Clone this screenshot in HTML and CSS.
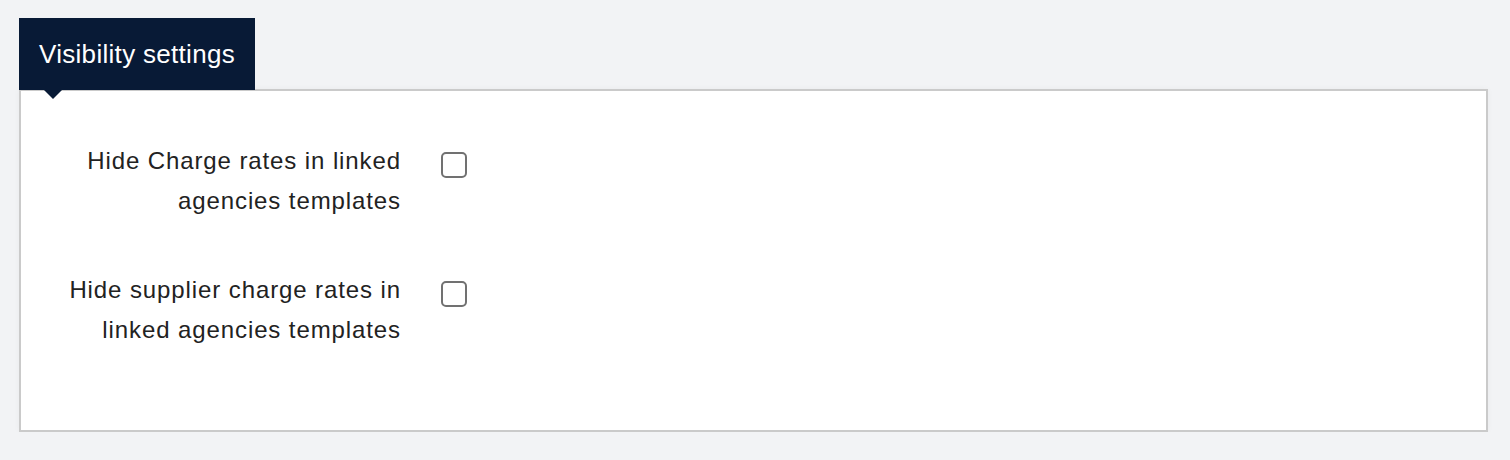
FILE: index.html
```html
<!DOCTYPE html>
<html lang="en">
<head>
<meta charset="utf-8">
<title>Visibility settings</title>
<link rel="stylesheet" href="styles.css">
</head>
<body>
<div class="page">
  <div class="tab">Visibility settings</div>
  <section class="panel">
    <div class="row">
      <label class="label" for="c1">Hide Charge rates in linked agencies templates</label>
      <span class="check"><input type="checkbox" id="c1"></span>
    </div>
    <div class="row">
      <label class="label" for="c2">Hide supplier charge rates in linked agencies templates</label>
      <span class="check"><input type="checkbox" id="c2"></span>
    </div>
  </section>
</div>
</body>
</html>
```
FILE: styles.css
```css
html, body {
  margin: 0;
  padding: 0;
  background: #f2f3f5;
  font-family: "Liberation Sans", Arial, Helvetica, sans-serif;
}
.page {
  padding: 18px 22px 0 19px;
}
.tab {
  position: relative;
  display: inline-block;
  background: #081a36;
  color: #ffffff;
  font-size: 26px;
  letter-spacing: 0.3px;
  line-height: 72px;
  height: 72px;
  padding: 0 20px 0 20px;
  box-sizing: border-box;
  z-index: 1;
}
.tab::after {
  content: "";
  position: absolute;
  left: 25px;
  bottom: -9px;
  width: 0;
  height: 0;
  border-left: 9px solid transparent;
  border-right: 9px solid transparent;
  border-top: 9px solid #081a36;
}
.panel {
  background: #ffffff;
  border: 2px solid #cacaca;
  margin-top: -1px;
  padding: 50px 0 80px 0;
  box-shadow: 0 0 6px rgba(0, 0, 0, 0.04);
  display: flex;
  flex-direction: column;
  gap: 49px;
}
.row {
  display: flex;
  align-items: flex-start;
}
.label {
  margin-left: 35px;
  width: 345px;
  text-align: right;
  font-size: 24px;
  letter-spacing: 0.9px;
  line-height: 40px;
  color: #222222;
}
.check {
  margin-left: 40px;
  padding-top: 11px;
}
.check input {
  appearance: none;
  -webkit-appearance: none;
  margin: 0;
  display: block;
  width: 26px;
  height: 26px;
  border: 2px solid #717171;
  border-radius: 5px;
  background: #ffffff;
  box-sizing: border-box;
}
```
